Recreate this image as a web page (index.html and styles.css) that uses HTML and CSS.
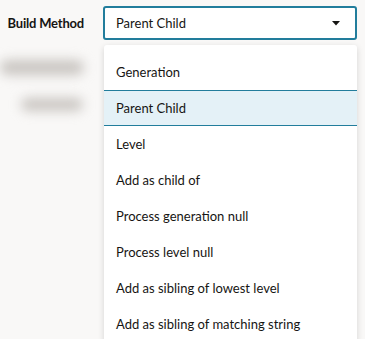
FILE: index.html
```html
<!DOCTYPE html>
<html>
  <head>
    <meta charset="utf-8">
    <meta name="viewport" content="width=device-width">
    <title></title>
    <link rel="stylesheet" href="styles.css">
  </head>
  <body>
    <div class="form">
      <div class="labels">
        <label class="label">Build Method</label>
        <div class="ghost ghost-long"></div>
        <div class="ghost ghost-short"></div>
      </div>
      <div class="field">
        <div class="select">
          <span>Parent Child</span>
          <svg class="caret" width="8" height="5" viewBox="0 0 8 5"><path d="M0 0h8L4 4.5z" fill="#161513"/></svg>
        </div>
        <ul class="menu">
          <li>Generation</li>
          <li class="selected">Parent Child</li>
          <li>Level</li>
          <li>Add as child of</li>
          <li>Process generation null</li>
          <li>Process level null</li>
          <li>Add as sibling of lowest level</li>
          <li>Add as sibling of matching string</li>
        </ul>
      </div>
    </div>
  </body>
</html>
```

FILE: styles.css
```css
* {
  box-sizing: border-box;
  margin: 0;
  padding: 0;
}
body {
  background: #f9f8f7;
  font-family: Lato, sans-serif;
  font-size: 13px;
  color: #161513;
  overflow: hidden;
}
.form {
  display: flex;
  padding: 6px 8px 0 0;
  gap: 19px;
}
.labels {
  width: 84px;
  display: flex;
  flex-direction: column;
  align-items: flex-end;
}
.label {
  font-weight: bold;
  height: 34px;
  line-height: 34px;
  white-space: nowrap;
  letter-spacing: -0.2px;
}
.ghost {
  background: #c9c5c1;
  filter: blur(6px);
  border-radius: 8px;
}
.ghost-long {
  width: 84px;
  height: 15px;
  margin: 20px 0 0 0;
}
.ghost-short {
  width: 62px;
  height: 13px;
  margin: 23px 1px 0 0;
}
.field {
  flex: 1;
}
.select {
  height: 34px;
  border: 2px solid #227d9c;
  border-radius: 3px;
  background: #fff;
  display: flex;
  align-items: center;
  justify-content: space-between;
  padding: 0 15px 0 11px;
}
.menu {
  list-style: none;
  background: #fff;
  margin: 5px 0 0 1px;
  padding-top: 9px;
  box-shadow: 0 2px 6px rgba(0, 0, 0, 0.15);
  border-radius: 3px 3px 0 0;
}
.menu li {
  height: 36px;
  line-height: 36px;
  padding-left: 12px;
  white-space: nowrap;
}
.menu li.selected {
  background: #e4f1f7;
  border-top: 1px solid #227d9c;
  border-bottom: 1px solid #227d9c;
  line-height: 34px;
}
```
